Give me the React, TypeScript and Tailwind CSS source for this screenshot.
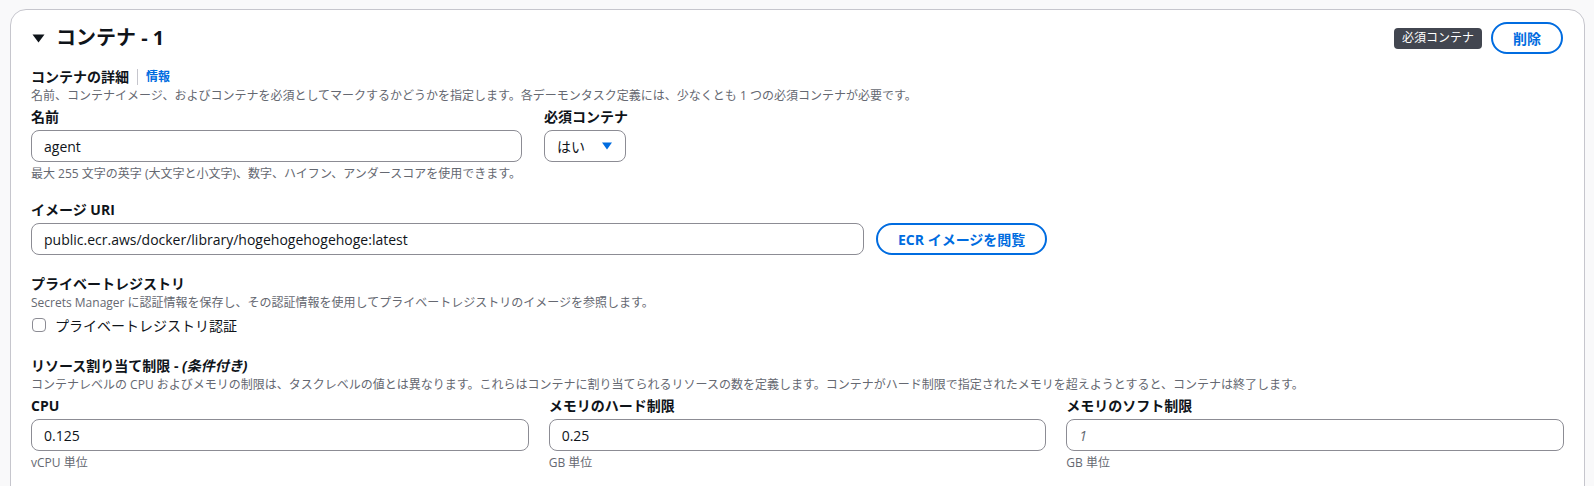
import React from "react";

const Label = ({ children }: { children: React.ReactNode }) => (
  <div className="text-[14px] leading-[18px] font-bold text-[#0f141a]">{children}</div>
);

const Desc = ({ children, className = "" }: { children: React.ReactNode; className?: string }) => (
  <div className={`text-[12px] leading-[16px] text-[#656871] ${className}`}>{children}</div>
);

const Input = ({ value, placeholder, className = "" }: { value?: string; placeholder?: string; className?: string }) => (
  <div
    className={`mt-1 flex h-[32px] items-center rounded-[8px] border border-[#8c8c94] bg-white px-3 text-[14px] ${className}`}
  >
    {value ? (
      <span className="text-[#0f141a]">{value}</span>
    ) : (
      <span className="italic text-[#656871]">{placeholder}</span>
    )}
  </div>
);

const PillButton = ({ children, className = "" }: { children: React.ReactNode; className?: string }) => (
  <button
    className={`flex h-[32px] items-center justify-center whitespace-nowrap rounded-full border-2 border-[#006ce0] bg-white text-[14px] font-bold text-[#006ce0] ${className}`}
  >
    {children}
  </button>
);

export default function App() {
  return (
    <div className="min-h-screen bg-[#f9f9fa] pl-[10px] pr-[9px] pt-[9px] font-['Open_Sans','Noto_Sans_CJK_JP',sans-serif] text-[#0f141a]">
      <div className="rounded-t-[16px] border border-[#c6c6cd] bg-white px-5 pb-12 pt-3">
        {/* Header */}
        <div className="flex h-[32px] items-center justify-between">
          <div className="flex items-center">
            <svg width="13" height="10" viewBox="0 0 13 10" className="ml-[1px] mr-[11px]">
              <path d="M0.5 1.5 L12.5 1.5 L6.5 9.5 Z" fill="#0f141a" />
            </svg>
            <span className="text-[20px] font-bold leading-[24px]">コンテナ - 1</span>
          </div>
          <div className="flex items-center">
            <span className="flex h-[21px] items-center rounded-[4px] bg-[#424650] px-2 text-[12px] text-white">
              必須コンテナ
            </span>
            <PillButton className="ml-[9px] mr-[1px] px-5">削除</PillButton>
          </div>
        </div>

        {/* Container details */}
        <div className="mt-[14px] flex items-center">
          <Label>コンテナの詳細</Label>
          <span className="mx-2 h-[16px] w-px bg-[#c6c6cd]" />
          <span className="text-[12px] font-bold leading-[16px] text-[#006ce0]">情報</span>
        </div>
        <Desc className="mt-[2px]">
          名前、コンテナイメージ、およびコンテナを必須としてマークするかどうかを指定します。各デーモンタスク定義には、少なくとも 1 つの必須コンテナが必要です。
        </Desc>

        <div className="mt-1 flex items-start">
          <div className="w-[491px]">
            <Label>名前</Label>
            <Input value="agent" />
            <Desc className="mt-1">
              最大 255 文字の英字 (大文字と小文字)、数字、ハイフン、アンダースコアを使用できます。
            </Desc>
          </div>
          <div className="ml-[22px]">
            <Label>必須コンテナ</Label>
            <div className="mt-1 flex h-[32px] w-[82px] items-center justify-between rounded-[8px] border border-[#8c8c94] bg-white pl-3 pr-[12px] text-[14px]">
              <span>はい</span>
              <svg width="12" height="8" viewBox="0 0 12 8">
                <path d="M1 0.5 L11 0.5 L6 7.5 Z" fill="#006ce0" />
              </svg>
            </div>
          </div>
        </div>

        {/* Image URI */}
        <div className="mt-[19px]">
          <Label>イメージ URI</Label>
          <div className="flex items-center">
            <Input value="public.ecr.aws/docker/library/hogehogehogehoge:latest" className="w-[833px]" />
            <PillButton className="ml-[12px] mt-1 px-5">ECR イメージを閲覧</PillButton>
          </div>
        </div>

        {/* Private registry */}
        <div className="mt-5">
          <Label>プライベートレジストリ</Label>
          <Desc className="mt-[2px]">
            Secrets Manager に認証情報を保存し、その認証情報を使用してプライベートレジストリのイメージを参照します。
          </Desc>
          <label className="mt-1 flex h-[20px] items-center">
            <span className="ml-[1px] h-[14px] w-[14px] rounded-[4px] border border-[#8c8c94] bg-white" />
            <span className="ml-[9px] text-[14px] text-[#0f141a]">プライベートレジストリ認証</span>
          </label>
        </div>

        {/* Resource limits */}
        <div className="mt-[22px]">
          <Label>
            リソース割り当て制限 - <i>(条件付き)</i>
          </Label>
          <Desc className="mt-[2px]">
            コンテナレベルの CPU およびメモリの制限は、タスクレベルの値とは異なります。これらはコンテナに割り当てられるリソースの数を定義します。コンテナがハード制限で指定されたメモリを超えようとすると、コンテナは終了します。
          </Desc>
          <div className="mt-1 grid grid-cols-3 gap-x-5">
            <div>
              <Label>CPU</Label>
              <Input value="0.125" />
              <Desc className="mt-1">vCPU 単位</Desc>
            </div>
            <div>
              <Label>メモリのハード制限</Label>
              <Input value="0.25" />
              <Desc className="mt-1">GB 単位</Desc>
            </div>
            <div>
              <Label>メモリのソフト制限</Label>
              <Input placeholder="1" />
              <Desc className="mt-1">GB 単位</Desc>
            </div>
          </div>
        </div>
      </div>
    </div>
  );
}
